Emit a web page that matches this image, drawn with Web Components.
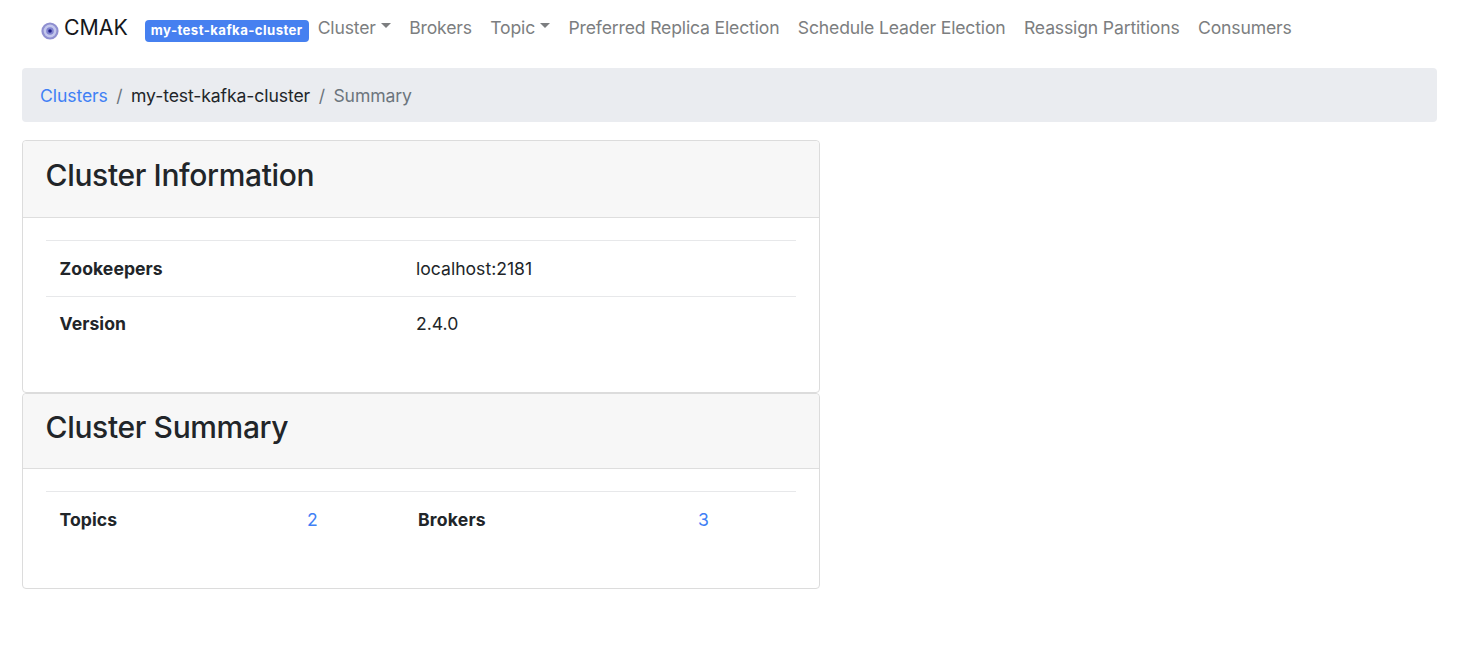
<!DOCTYPE html>
<html><head><meta charset="utf-8"><style>
html,body{margin:0;background:#fff}
body{font-family:Inter,"Liberation Sans",sans-serif;color:#212529;font-size:17.6px;width:1460px;height:652px;overflow:hidden}
b{font-weight:700;letter-spacing:.05px}
</style></head><body>
<template id="t-page"><style>
:host{display:flex;flex-direction:column;padding:0 23px 0 22px}
</style><slot></slot></template>
<template id="t-nav"><style>
:host{display:flex;align-items:center;height:68px;padding:0 0 14px 19px;box-sizing:border-box}
.brand{display:flex;align-items:center;gap:5px;font-size:21.3px;color:#16181b;margin-right:17px}
svg{display:block;margin-top:7px}
</style><div class="brand"><svg width="18" height="18" viewBox="0 0 18 18"><circle cx="9" cy="9" r="8.6" fill="#8f8fd0"/><circle cx="9" cy="9" r="6.4" fill="#c3c7ec"/><circle cx="9" cy="9" r="3.8" fill="#8184cf"/><circle cx="9" cy="9" r="1.8" fill="#23238c"/></svg><span>CMAK</span></div><slot></slot></template>
<template id="t-badge"><style>
:host{display:inline-block;background:#4680f0;color:#fff;font-weight:700;font-size:13.2px;letter-spacing:.42px;line-height:1;padding:4px 6px;border-radius:4px;margin-right:9px;margin-top:8px}
</style><slot></slot></template>
<template id="t-link"><style>
:host{display:inline-flex;align-items:center;color:#7c7e80;margin-right:18.4px;white-space:nowrap;letter-spacing:-.16px}
.c{display:none;width:0;height:0;border-left:5px solid transparent;border-right:5px solid transparent;border-top:5px solid currentColor;margin-left:5px;margin-top:-3px}
:host([caret]) .c{display:block}
</style><slot></slot><span class="c"></span></template>
<template id="t-crumbs"><style>
:host{display:flex;align-items:center;height:54px;background:#eaecf0;border-radius:4px;padding:0 18px;box-sizing:border-box;margin-bottom:18px;letter-spacing:-.1px}
</style><slot></slot></template>
<template id="t-crumb"><style>
:host{display:inline-block;color:#212529}
:host([link]){color:#3f80f5}
:host([muted]){color:#6c757d}
.s{display:none;color:#6c757d;padding:0 8.5px}
:host([sep]) .s{display:inline}
</style><span class="s">/</span><slot></slot></template>
<template id="t-card"><style>
:host{display:block;width:798px;box-sizing:border-box;border:1px solid #dcdcdc;border-radius:4px;background:#fff}
h3{margin:0;font-weight:500;font-size:30px;letter-spacing:-.36px;line-height:1.2;padding:var(--pt,16px) 23px 0 22.6px;height:var(--hh,75px);box-sizing:border-box;background:#f7f7f7;border-bottom:1px solid #dedede;border-radius:4px 4px 0 0;color:#212529}
.b{padding:22px 23px var(--pb,39px)}
</style><h3></h3><div class="b"><slot></slot></div></template>
<template id="t-row"><style>
:host{display:grid;grid-template-columns:var(--cols,356.4px 1fr);align-items:center;height:var(--h,56px);padding-left:13.6px;border-top:1px solid #e7e8ea;box-sizing:border-box}
</style><slot></slot></template>
<script>
function reg(name,tid,init){customElements.define(name,class extends HTMLElement{constructor(){super();this.attachShadow({mode:'open'}).appendChild(document.getElementById(tid).content.cloneNode(true));}connectedCallback(){if(init)init(this);}});}
reg('x-page','t-page');reg('x-nav','t-nav');reg('x-badge','t-badge');reg('x-link','t-link');reg('x-crumbs','t-crumbs');reg('x-crumb','t-crumb');
reg('x-card','t-card',e=>{e.shadowRoot.querySelector('h3').textContent=e.getAttribute('heading');});
reg('x-row','t-row');
</script>
<x-page>
<x-nav><x-badge>my-test-kafka-cluster</x-badge><x-link caret>Cluster</x-link><x-link>Brokers</x-link><x-link caret>Topic</x-link><x-link>Preferred Replica Election</x-link><x-link>Schedule Leader Election</x-link><x-link>Reassign Partitions</x-link><x-link>Consumers</x-link></x-nav>
<x-crumbs><x-crumb link>Clusters</x-crumb><x-crumb sep>my-test-kafka-cluster</x-crumb><x-crumb sep muted>Summary</x-crumb></x-crumbs>
<x-card heading="Cluster Information" style="--hh:77px;--pb:41px">
<x-row style="--h:55.5px"><b>Zookeepers</b><span>localhost:2181</span></x-row>
<x-row style="--h:55.5px"><b>Version</b><span>2.4.0</span></x-row>
</x-card>
<x-card heading="Cluster Summary" style="--pt:15px;--pb:41px">
<x-row style="--cols:247.4px 111px 280px 1fr;--h:56px"><b>Topics</b><span style="color:#3f80f5">2</span><b style="letter-spacing:.2px">Brokers</b><span style="color:#3f80f5">3</span></x-row>
</x-card>
</x-page>
</body></html>
